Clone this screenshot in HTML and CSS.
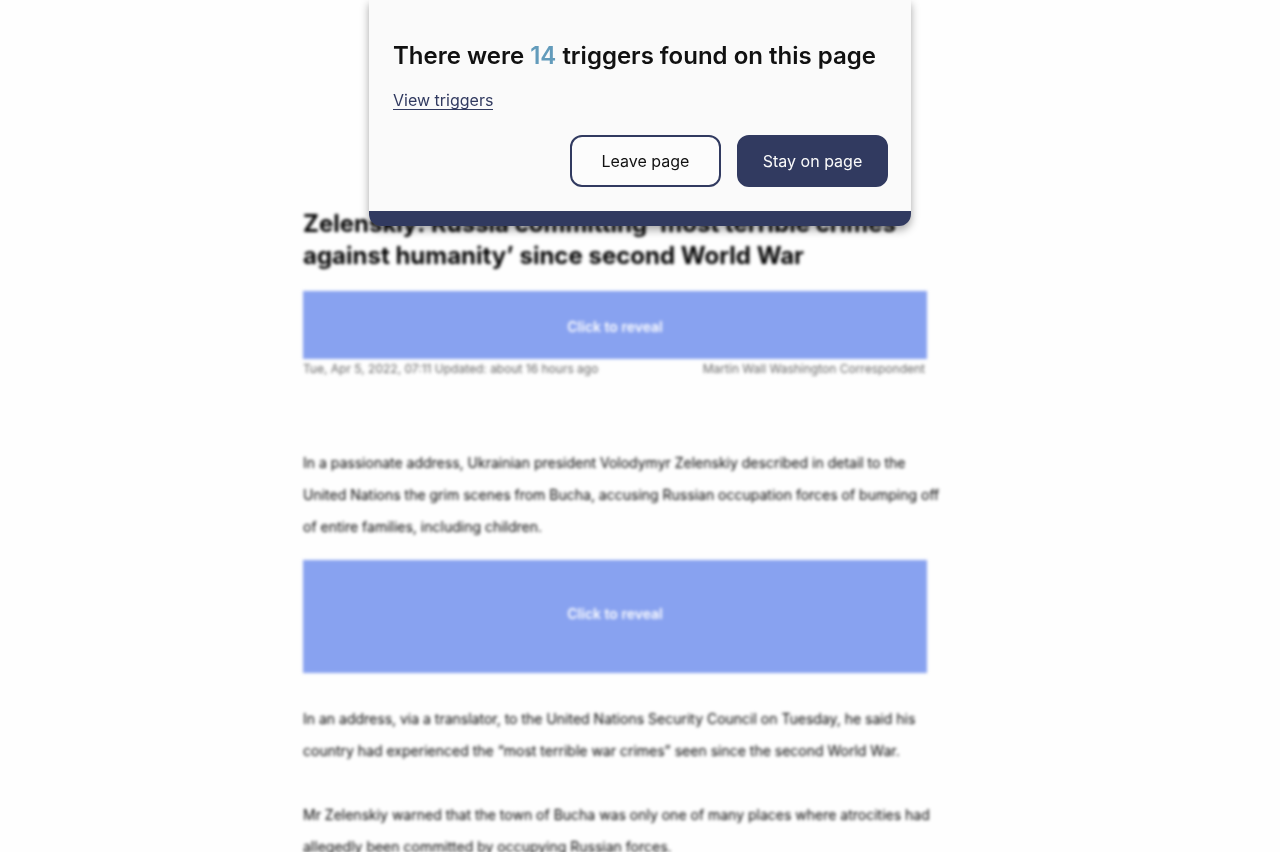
FILE: index.html
```html
<!DOCTYPE html>
<html lang="en">
<head>
<meta charset="utf-8">
<meta name="viewport" content="width=device-width, initial-scale=1">
<title>Trigger warning</title>
<link rel="stylesheet" href="styles.css">
</head>
<body>
<main class="page">
  <article class="article">
    <h1 class="headline">Zelenskiy: Russia committing ‘most terrible crimes against humanity’ since second World War</h1>
    <button class="reveal" type="button">Click to reveal</button>
    <div class="meta">
      <span>Tue, Apr 5, 2022, 07:11 Updated: about 16 hours ago</span>
      <span>Martin Wall Washington Correspondent</span>
    </div>
    <p class="lead">In a passionate address, Ukrainian president Volodymyr Zelenskiy described in detail to the United Nations the grim scenes from Bucha, accusing Russian occupation forces of bumping off of entire families, including children.</p>
    <button class="reveal reveal-tall" type="button">Click to reveal</button>
    <p>In an address, via a translator, to the United Nations Security Council on Tuesday, he said his country had experienced the “most terrible war crimes” seen since the second World War.</p>
    <p>Mr Zelenskiy warned that the town of Bucha was only one of many places where atrocities had allegedly been committed by occupying Russian forces.</p>
  </article>
</main>
<section class="dialog" role="dialog" aria-labelledby="dialog-title">
  <h2 class="dialog-title" id="dialog-title">There were <span class="count">14</span> triggers found on this page</h2>
  <a class="view-link" href="#triggers">View triggers</a>
  <div class="actions">
    <button class="btn btn-outline" type="button">Leave page</button>
    <button class="btn btn-solid" type="button">Stay on page</button>
  </div>
</section>
</body>
</html>
```
FILE: styles.css
```css
* {
  box-sizing: border-box;
}

body {
  margin: 0;
  height: 100vh;
  overflow: hidden;
  background: #fefefe;
  color: #111;
  font-family: Inter, "Liberation Sans", sans-serif;
}

.page {
  display: flex;
  justify-content: center;
  padding: 208px 50px 32px 0;
}

.article {
  width: 100%;
  max-width: 624px;
  color: #000;
  filter: blur(1px) blur(1px);
}

.headline {
  margin: 0 0 19px;
  font-size: 24px;
  font-weight: 700;
  line-height: 32px;
}

.reveal {
  display: block;
  width: 100%;
  padding: 26px 16px 22px;
  border: 0;
  background: #88a2f0;
  color: #fff;
  font: 600 14px/20px Inter, "Liberation Sans", sans-serif;
}

.reveal-tall {
  margin-bottom: 30px;
  padding: 44px 16px 49px;
}

.meta {
  display: flex;
  justify-content: space-between;
  padding-right: 2px;
  color: #666;
  font-size: 12px;
  line-height: 20px;
}

.article p {
  margin: 0 -16px 32px 0;
  font-size: 14px;
  line-height: 32px;
}

.article .lead {
  margin-top: 68px;
  margin-bottom: 17px;
}

.dialog {
  position: fixed;
  top: 0;
  left: 0;
  right: 0;
  display: flex;
  flex-direction: column;
  max-width: 542px;
  margin: 0 auto;
  padding: 40px 23px 24px 24px;
  border-bottom: 15px solid #313a60;
  border-radius: 0 0 12px 12px;
  background: #fafafa;
  box-shadow: 0 4px 8px rgba(0, 0, 0, 0.35);
}

.dialog-title {
  margin: 0;
  font-size: 24px;
  font-weight: 600;
  line-height: 32px;
}

.count {
  color: #629bbb;
}

.view-link {
  align-self: flex-start;
  margin: 19px 0 25px;
  border-bottom: 1px solid #313a60;
  color: #313a60;
  font-size: 16px;
  line-height: 18px;
  text-decoration: none;
}

.actions {
  display: flex;
  justify-content: flex-end;
  gap: 16px;
}

.btn {
  width: 151px;
  height: 52px;
  border: 2px solid #313a60;
  border-radius: 12px;
  font: 400 16px/24px Inter, "Liberation Sans", sans-serif;
}

.btn-outline {
  background: #fcfcfc;
  color: #111;
}

.btn-solid {
  background: #313a60;
  color: #fafafa;
}
```
